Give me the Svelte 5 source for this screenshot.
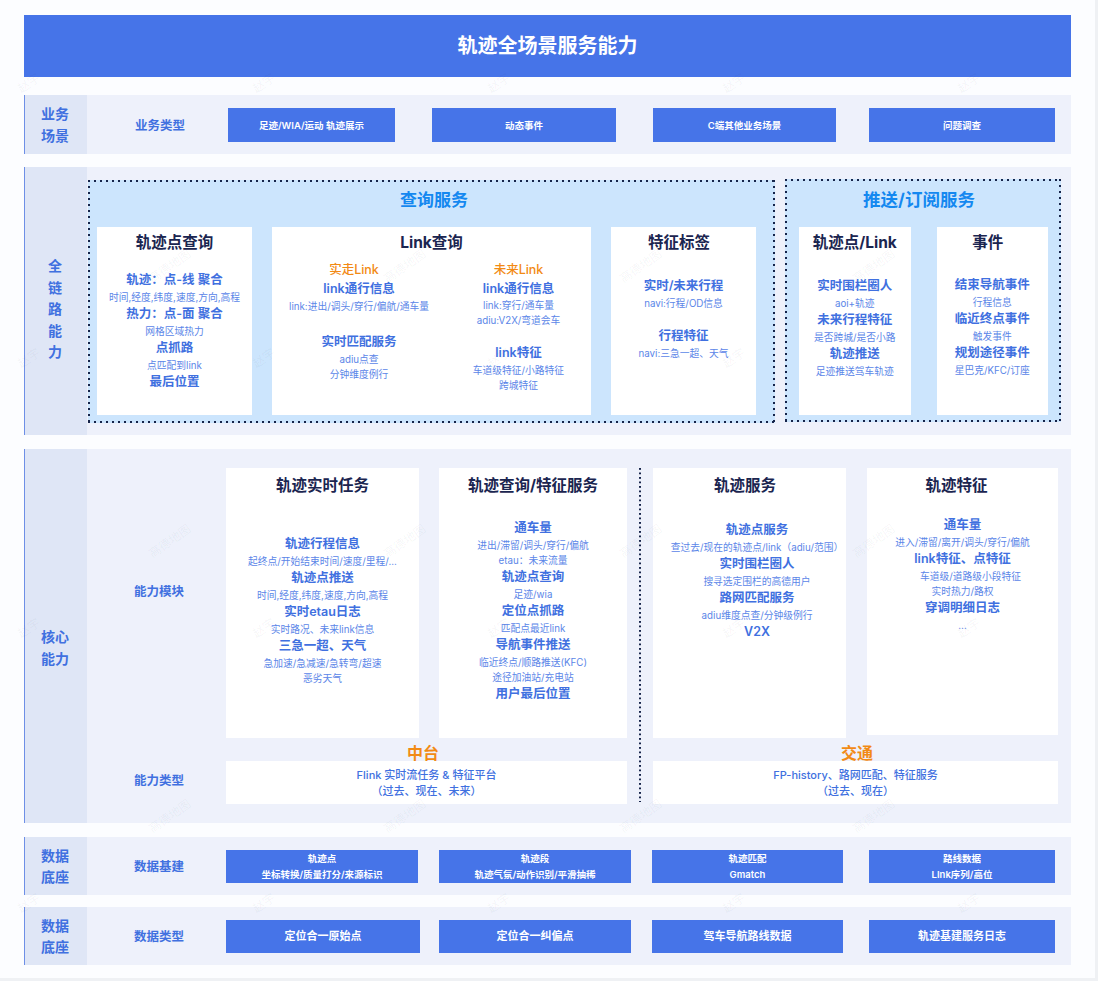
<script>
  const h = (t, gap = false, cls = '') => ({ k: 'h', t, gap, cls });
  const s = (t, cls = '') => ({ k: 's', t, cls });
  const o = (t, cls = '') => ({ k: 'o', t, cls });

  const linkCols = [
    [o('实走Link', 'lft'), h('link通行信息'), s('link:进出/调头/穿行/偏航/通车量'), h('实时匹配服务', true, 'mid'), s('adiu点查'), s('分钟维度例行')],
    [o('未来Link'), h('link通行信息', false, 'tight'), s('link:穿行/通车量'), s('adiu:V2X/弯道会车'), h('link特征', true), s('车道级特征/小路特征'), s('跨城特征')]
  ];

  const pointLines = [
    h('轨迹：点-线 聚合'), s('时间,经度,纬度,速度,方向,高程'),
    h('热力：点-面 聚合'), s('网格区域热力'),
    h('点抓路'), s('点匹配到link'),
    h('最后位置')
  ];
  const tagLines = [h('实时/未来行程'), s('navi:行程/OD信息'), h('行程特征', true), s('navi:三急一超、天气')];
  const pushCards = [
    { title: '轨迹点/Link', pad: 17.5, lines: [h('实时围栏圈人'), s('aoi+轨迹'), h('未来行程特征'), s('是否跨城/是否小路'), h('轨迹推送'), s('足迹推送驾车轨迹')] },
    { title: '事件', pad: 16.5, shift: true, lines: [h('结束导航事件'), s('行程信息'), h('临近终点事件'), s('触发事件'), h('规划途径事件'), s('星巴克/KFC/订座')] }
  ];

  const coreCards = [
    { title: '轨迹实时任务', col: 'c1', pad: 31, lines: [
      h('轨迹行程信息'), s('起终点/开始结束时间/速度/里程/...'),
      h('轨迹点推送'), s('时间,经度,纬度,速度,方向,高程'),
      h('实时etau日志'), s('实时路况、未来link信息'),
      h('三急一超、天气'), s('急加速/急减速/急转弯/超速'), s('恶劣天气')
    ] },
    { title: '轨迹查询/特征服务', col: 'c2', pad: 14.5, lines: [
      h('通车量'), s('进出/滞留/调头/穿行/偏航'), s('etau：未来流量'),
      h('轨迹点查询'), s('足迹/wia'),
      h('定位点抓路'), s('匹配点最近link'),
      h('导航事件推送'), s('临近终点/顺路推送(KFC)'), s('途径加油站/充电站'),
      h('用户最后位置')
    ] },
    { title: '轨迹服务', col: 'c3', pad: 16.5, shift: true, bodyShift: true, lines: [
      h('轨迹点服务'), s('查过去/现在的轨迹点/link（adiu/范围）'),
      h('实时围栏圈人'), s('搜寻选定围栏的高德用户'),
      h('路网匹配服务'), s('adiu维度点查/分钟级例行'),
      h('V2X')
    ] },
    { title: '轨迹特征', col: 'c4', pad: 11.5, shift: true, lines: [
      h('通车量'), s('进入/滞留/离开/调头/穿行/偏航'),
      h('link特征、点特征'), s('车道级/道路级小段特征', 'nudge'), s('实时热力/路权'),
      h('穿调明细日志'), s('...')
    ] }
  ];

  const bizButtons = ['足迹/WIA/运动 轨迹展示', '动态事件', 'C端其他业务场景', '问题调查'];
  const baseButtons = [
    ['轨迹点', '坐标转换/质量打分/来源标识'],
    ['轨迹段', '轨迹气氛/动作识别/平滑抽稀'],
    ['轨迹匹配', 'Gmatch'],
    ['路线数据', 'LInk序列/高位']
  ];
  const typeButtons = ['定位合一原始点', '定位合一纠偏点', '驾车导航路线数据', '轨迹基建服务日志'];

  const marks = [];
  for (const x of [169, 404, 640, 873]) for (const y of [265, 540, 815]) marks.push({ x, y, t: '高德地图' });
  for (const x of [28, 263, 498, 733, 968]) for (const y of [82, 357, 627, 902]) marks.push({ x, y, t: '赵宇' });
</script>

{#snippet lines(list)}
  {#each list as l}
    <div class="{l.k} {l.cls}" class:gap={l.gap}>{l.t}</div>
  {/each}
{/snippet}

<div class="page">
  <header class="banner">轨迹全场景服务能力</header>

  <section class="row biz">
    <div class="side">业务<br />场景</div>
    <div class="kind">业务类型</div>
    {#each bizButtons as b}<div class="btn">{b}</div>{/each}
  </section>

  <section class="row chain">
    <div class="side side-chain">全<br />链<br />路<br />能<br />力</div>
    <div class="panel query">
      <h2>查询服务</h2>
      <div class="cards">
        <div class="card point">
          <div class="title">轨迹点查询</div>
          <div class="body pad-11">{@render lines(pointLines)}</div>
        </div>
        <div class="card link">
          <div class="title">Link查询</div>
          <div class="link-cols">
            {#each linkCols as col}
              <div>{@render lines(col)}</div>
            {/each}
          </div>
        </div>
        <div class="card tag">
          <div class="title shift">特征标签</div>
          <div class="body pad-18">{@render lines(tagLines)}</div>
        </div>
      </div>
    </div>
    <div class="panel push">
      <h2>推送/订阅服务</h2>
      <div class="cards">
        {#each pushCards as c}
          <div class="card pc">
            <div class="title" class:shift={c.shift}>{c.title}</div>
            <div class="body" style:padding-top="{c.pad}px">{@render lines(c.lines)}</div>
          </div>
        {/each}
      </div>
    </div>
  </section>

  <section class="row core">
    <div class="side side-core">核心<br />能力</div>
    <div class="core-grid">
      <div class="kind kind-module">能力模块</div>
      {#each coreCards as c}
        <div class="card {c.col}">
          <div class="title" class:shift={c.shift}>{c.title}</div>
          <div class="body" class:body-shift={c.bodyShift} style:padding-top="{c.pad}px">{@render lines(c.lines)}</div>
        </div>
      {/each}
      <div class="divider"></div>
      <div class="tier tier-a">中台</div>
      <div class="tier tier-b">交通</div>
      <div class="kind kind-type">能力类型</div>
      <div class="type type-a">Flink 实时流任务 &amp; 特征平台<br />（过去、现在、未来）</div>
      <div class="type type-b">FP-history、路网匹配、特征服务<br />（过去、现在）</div>
    </div>
  </section>

  <section class="row base">
    <div class="side">数据<br />底座</div>
    <div class="kind kind-low">数据基建</div>
    {#each baseButtons as b}<div class="btn">{b[0]}<br />{b[1]}</div>{/each}
  </section>

  <section class="row data">
    <div class="side">数据<br />底座</div>
    <div class="kind kind-low">数据类型</div>
    {#each typeButtons as b}<div class="btn">{b}</div>{/each}
  </section>

  <div class="marks">
    {#each marks as m}
      <span style:left="{m.x}px" style:top="{m.y}px">{m.t}</span>
    {/each}
  </div>
</div>

<style>
  :global(body) {
    background: #eff1f4;
  }
  .page {
    position: relative;
    width: 1095px;
    height: 978px;
    box-sizing: border-box;
    padding: 15px 0 0 24px;
    background: #fcfdff;
    overflow: hidden;
    font-family: Inter, "Noto Sans CJK SC", sans-serif;
    color: #4070e0;
  }
  .banner {
    width: 1047px;
    height: 62px;
    background: #4674e8;
    color: #fff;
    font-size: 20px;
    font-weight: 700;
    line-height: 62px;
    text-align: center;
  }
  .row {
    display: flex;
    width: 1047px;
    background: #eef1fb;
  }
  .side {
    flex: none;
    box-sizing: border-box;
    width: 63px;
    display: flex;
    align-items: center;
    justify-content: center;
    text-align: center;
    background: #dfe6f6;
    border-left: 1px solid #6e8fe6;
    padding-right: 2px;
    font-size: 14px;
    font-weight: 600;
    line-height: 21.5px;
  }
  .side-chain {
    padding-top: 16px;
  }
  .side-core {
    padding-top: 23px;
  }
  .kind {
    flex: none;
    box-sizing: border-box;
    display: flex;
    align-items: center;
    justify-content: center;
    padding-left: 5px;
    font-size: 12.5px;
    font-weight: 600;
  }
  .btn {
    flex: none;
    display: flex;
    align-items: center;
    justify-content: center;
    text-align: center;
    background: #4674e8;
    color: #fff;
    font-weight: 600;
    font-size: 9.5px;
  }

  .biz {
    height: 59px;
    margin-top: 18px;
    align-items: stretch;
  }
  .biz .kind {
    width: 141px;
  }
  .biz .btn {
    align-self: center;
    height: 34px;
  }
  .biz .btn:nth-of-type(3) {
    width: 167px;
  }
  .biz .btn:nth-of-type(4) {
    width: 184px;
    margin-left: 37px;
  }
  .biz .btn:nth-of-type(5) {
    width: 183px;
    margin-left: 37px;
  }
  .biz .btn:nth-of-type(6) {
    width: 186px;
    margin-left: 33px;
  }

  .chain {
    height: 268px;
    margin-top: 13px;
  }
  .panel {
    box-sizing: border-box;
    flex: none;
    background-color: #cce5fd;
    background-image:
      radial-gradient(circle at 1px 1px, #16244a 1px, transparent 1.2px),
      radial-gradient(circle at 1px 1px, #16244a 1px, transparent 1.2px),
      radial-gradient(circle at 1px 1px, #16244a 1px, transparent 1.2px),
      radial-gradient(circle at 1px 1px, #16244a 1px, transparent 1.2px);
    background-size: 6px 2px, 6px 2px, 2px 6px, 2px 6px;
    background-position: left top, left bottom, left top, right top;
    background-repeat: repeat-x, repeat-x, repeat-y, repeat-y;
    padding: 2px;
    height: 243px;
  }
  .panel h2 {
    margin: 0;
    text-align: center;
    font-size: 17px;
    font-weight: 700;
    color: #1488f0;
  }
  .query {
    width: 687px;
    margin: 13px 0 0 1px;
    padding-left: 9px;
  }
  .query h2 {
    line-height: 36px;
    padding-bottom: 9px;
    padding-right: 2px;
  }
  .push {
    width: 276px;
    margin: 12px 0 0 10px;
    padding-left: 14px;
  }
  .push h2 {
    line-height: 38px;
    padding-bottom: 8px;
    padding-right: 20px;
    font-size: 17.5px;
  }
  .cards {
    display: flex;
    gap: 20px;
  }
  .push .cards {
    gap: 26px;
  }
  .card {
    flex: none;
    height: 188px;
    background: #fff;
    text-align: center;
  }
  .point {
    width: 155px;
  }
  .link {
    width: 319px;
  }
  .tag {
    width: 145px;
  }
  .pc {
    width: 111.5px;
  }
  .title {
    font-size: 15.5px;
    font-weight: 700;
    line-height: 32px;
    color: #1b2550;
    white-space: nowrap;
  }
  .shift {
    padding-right: 9px;
  }
  .pad-11 {
    padding-top: 11.5px;
  }
  .pad-18 {
    padding-top: 18px;
  }
  .h,
  .o {
    font-size: 12.5px;
    font-weight: 600;
    line-height: 17px;
    margin-bottom: 2px;
    white-space: nowrap;
  }
  .o {
    color: #f28a14;
    font-weight: 500;
  }
  .s {
    font-size: 9.75px;
    line-height: 15px;
    color: #5b86e8;
    white-space: nowrap;
  }
  .gap {
    margin-top: 16px;
  }
  .mid {
    margin-top: 19px;
  }
  .tight {
    margin-bottom: 1px;
  }
  .lft {
    padding-right: 10px;
  }
  .nudge {
    padding-left: 16px;
  }
  .link-cols {
    display: grid;
    grid-template-columns: 174px 145px;
    padding-top: 1.5px;
  }

  .core {
    height: 374px;
    margin-top: 14px;
  }
  .core-grid {
    display: grid;
    grid-template-columns: 139px 193px 20px 188px 26px 193px 21px 191px;
    grid-template-rows: 270px 23px 43px;
    padding-top: 19px;
  }
  .core-grid .card {
    grid-row: 1;
    height: auto;
  }
  .core-grid .title {
    line-height: 36px;
  }
  .c1 {
    grid-column: 2;
  }
  .c2 {
    grid-column: 4;
  }
  .c3 {
    grid-column: 6;
  }
  .core-grid .c4 {
    grid-column: 8;
    height: 267px;
  }
  .core-grid .c4 .title {
    padding-right: 12px;
  }
  .body-shift {
    padding-left: 15px;
  }
  .kind-module {
    grid-column: 1;
    grid-row: 1;
    padding-bottom: 26px;
  }
  .kind-type {
    grid-column: 1;
    grid-row: 3;
    padding-bottom: 7px;
  }
  .divider {
    grid-column: 5;
    grid-row: 1 / 4;
    justify-self: center;
    width: 2px;
    margin-bottom: 2px;
    background: radial-gradient(circle at 1px 1px, #16244a 1px, transparent 1.2px) left top / 2px 4.5px repeat-y;
  }
  .tier {
    grid-row: 2;
    font-size: 16px;
    font-weight: 700;
    line-height: 16px;
    padding-top: 7px;
    color: #f28a14;
    text-align: center;
  }
  .tier-a {
    grid-column: 2 / 5;
    padding-right: 7px;
  }
  .tier-b {
    grid-column: 6 / 9;
    padding-left: 3px;
  }
  .type {
    grid-row: 3;
    background: #fff;
    font-size: 11px;
    line-height: 16px;
    text-align: center;
    display: flex;
    align-items: center;
    justify-content: center;
    font-weight: 500;
  }
  .type-a {
    grid-column: 2 / 5;
  }
  .type-b {
    grid-column: 6 / 9;
  }

  .base,
  .data {
    height: 58px;
    align-items: stretch;
  }
  .base {
    margin-top: 14px;
  }
  .data {
    margin-top: 12px;
  }
  .kind-low {
    width: 139px;
    padding-bottom: 2px;
  }
  .base .btn,
  .data .btn {
    align-self: center;
    height: 33px;
    line-height: 16px;
  }
  .base .btn {
    box-sizing: border-box;
    padding-top: 1px;
  }
  .data .btn {
    font-size: 11px;
  }
  .base .btn:nth-of-type(3) {
    width: 192px;
  }
  .data .btn:nth-of-type(3) {
    width: 194px;
  }
  .base .btn:nth-of-type(4) {
    width: 192px;
    margin-left: 21px;
  }
  .data .btn:nth-of-type(4) {
    width: 192px;
    margin-left: 19px;
  }
  .base .btn:nth-of-type(5),
  .data .btn:nth-of-type(5) {
    width: 191px;
    margin-left: 21px;
  }
  .base .btn:nth-of-type(6),
  .data .btn:nth-of-type(6) {
    width: 186px;
    margin-left: 26px;
  }

  .marks {
    position: absolute;
    inset: 0;
    pointer-events: none;
  }
  .marks span {
    position: absolute;
    transform: translate(-50%, -50%) rotate(-35deg);
    font-size: 12px;
    color: rgba(40, 50, 80, 0.05);
    white-space: nowrap;
  }
</style>
